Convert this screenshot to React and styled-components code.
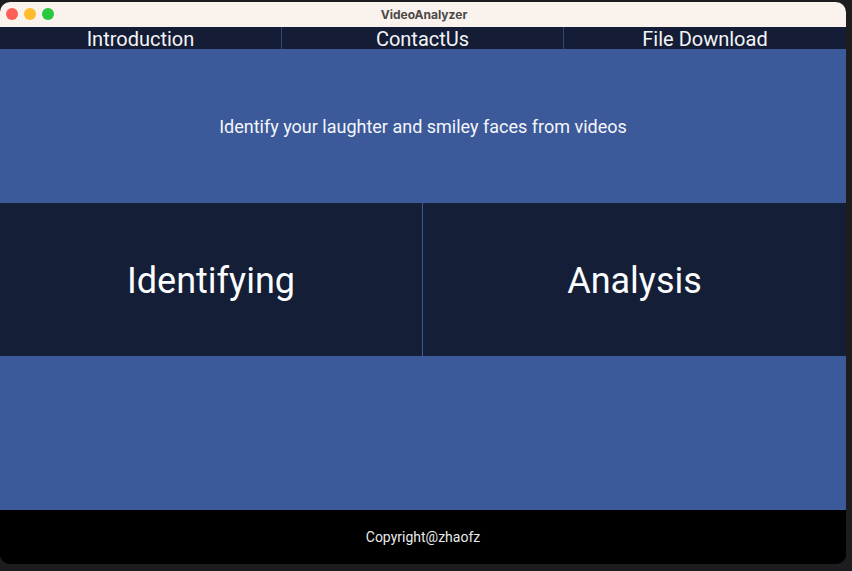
import React from 'react'
import styled, { createGlobalStyle } from 'styled-components'

const GlobalStyle = createGlobalStyle`
  html, body {
    margin: 0;
    padding: 0;
    background: #1d1d1f;
  }
  body {
    font-family: Roboto, "Liberation Sans", sans-serif;
  }
`

const navItems = ['Introduction', 'ContactUs', 'File Download']

function App() {
  return (
    <>
      <GlobalStyle />
      <Window>
        <TitleBar>
          <Lights>
            <Light color="#fe5f57" />
            <Light color="#febc2e" />
            <Light color="#28c840" />
          </Lights>
          <Title>VideoAnalyzer</Title>
        </TitleBar>

        <Nav>
          {navItems.map((item) => (
            <NavItem key={item}>{item}</NavItem>
          ))}
        </Nav>

        <Banner>
          <Tagline>Identify your laughter and smiley faces from videos</Tagline>
        </Banner>

        <Modes>
          <Mode>Identifying</Mode>
          <Mode>Analysis</Mode>
        </Modes>

        <Banner />

        <Footer>Copyright@zhaofz</Footer>
      </Window>
    </>
  )
}

export default App

const Window = styled.div`
  width: 846px;
  height: 562px;
  margin-top: 2px;
  border-radius: 10px;
  overflow: hidden;
  display: flex;
  flex-direction: column;
  background: #000;
`

const TitleBar = styled.div`
  position: relative;
  height: 25px;
  background: #f9f2ed;
  display: flex;
  align-items: center;
  justify-content: center;
`

const Lights = styled.div`
  position: absolute;
  left: 6px;
  top: 6px;
  display: flex;
  gap: 6px;
`

const Light = styled.span`
  width: 12px;
  height: 12px;
  border-radius: 50%;
  background: ${(p) => p.color};
`

const Title = styled.div`
  font-family: Inter, Roboto, sans-serif;
  font-size: 12px;
  font-weight: 700;
  color: #4b4846;
  padding-left: 2px;
`

const Nav = styled.div`
  height: 22px;
  display: grid;
  grid-template-columns: 281px 1px 281px 1px 1fr;
  background: #141d35;
`

const NavItem = styled.div`
  display: flex;
  align-items: center;
  justify-content: center;
  color: #f3f4f7;
  font-size: 20px;
  line-height: 22px;
  padding-top: 1px;
  border-left: 1px solid #34446b;

  &:first-child {
    border-left: none;
  }
  &:nth-child(2) {
    grid-column: 2 / 4;
  }
  &:nth-child(3) {
    grid-column: 4 / 6;
  }
`

const Banner = styled.div`
  height: 154px;
  background: #3c5a9a;
  display: flex;
  align-items: center;
  justify-content: center;
`

const Tagline = styled.div`
  color: #f4f6fb;
  font-size: 18px;
  padding-top: 1px;
`

const Modes = styled.div`
  height: 153px;
  display: grid;
  grid-template-columns: 422px 1fr;
  background: #141e37;
`

const Mode = styled.div`
  display: flex;
  align-items: center;
  justify-content: center;
  color: #fbfcfd;
  font-size: 36px;
  padding-top: 2px;

  & + & {
    border-left: 1px solid #3c5a9a;
  }
`

const Footer = styled.div`
  flex: 1;
  background: #000;
  color: #eaeaea;
  font-size: 14px;
  display: flex;
  align-items: center;
  justify-content: center;
`
